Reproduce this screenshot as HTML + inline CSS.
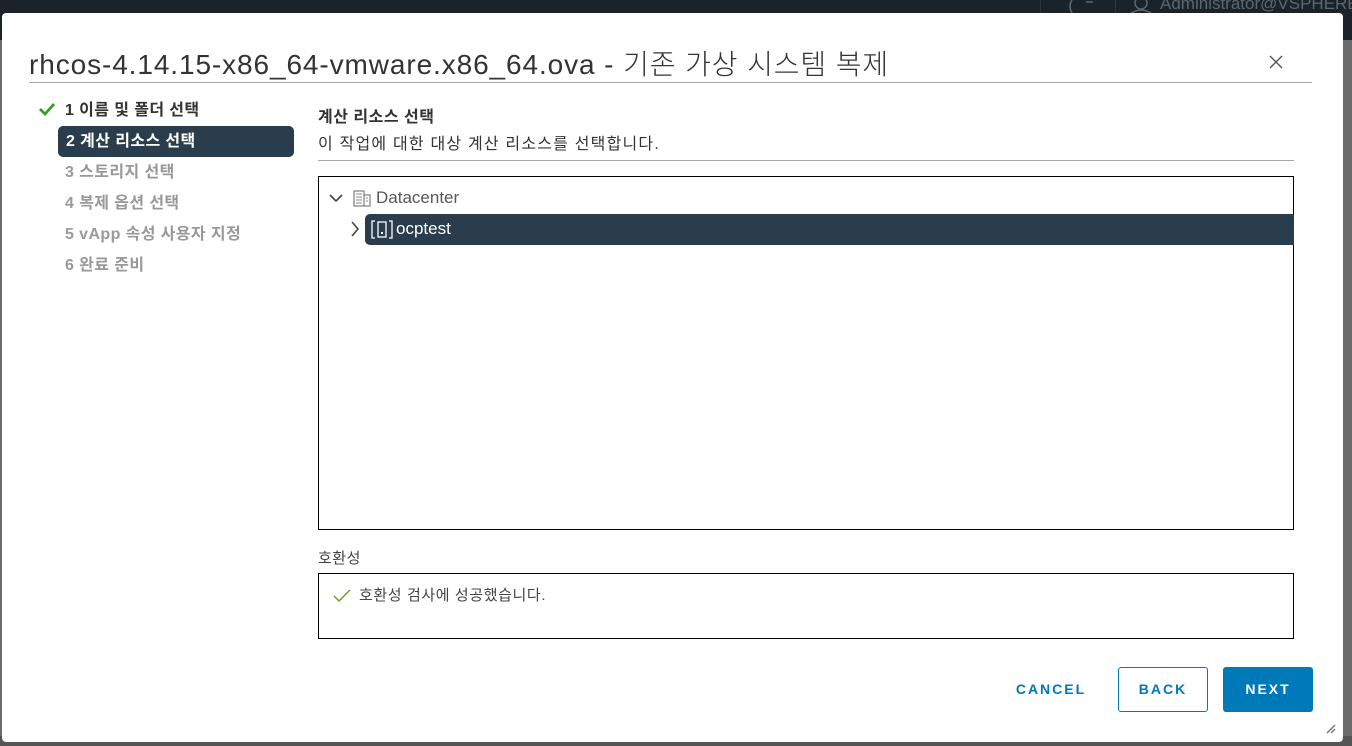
<!DOCTYPE html>
<html><head><meta charset="utf-8"><style>
*{box-sizing:border-box;margin:0;padding:0}
html,body{width:1352px;height:746px;overflow:hidden}
body{background:#6b6b6b;font-family:"Liberation Sans","Noto Sans CJK KR",sans-serif;position:relative;color:#333}
.top{position:absolute;left:0;top:0;width:1352px;height:40px;background:#1b2228}
.top .adm{position:absolute;left:1160px;top:-6px;color:#5d6770;font-size:17px}
.top .sep{position:absolute;top:0;width:1px;height:14px;background:#2c363e}
.bottom{position:absolute;left:0;top:736px;width:1352px;height:10px;background:#555}
.modal{position:absolute;left:2px;top:13px;width:1341px;height:729px;background:#fff;border-radius:4px}
.title{position:absolute;left:29px;top:43px;font-size:28px;color:#333;font-weight:300;letter-spacing:0.9px;white-space:nowrap}
.close{position:absolute;left:1268px;top:54px}
.hr1{position:absolute;left:29px;top:82px;width:1283px;height:1px;background:#a8a8a8}
.step{position:absolute;left:65px;font-size:16px;font-weight:bold;color:#999;white-space:nowrap;letter-spacing:0.4px}
.step.done{color:#333}
.step.active{left:58px;width:236px;height:31px;background:#293d4c;color:#fff;border-radius:5px;padding-left:8px;line-height:31px}
.h2{position:absolute;left:318px;top:103px;font-size:16px;font-weight:bold;color:#333;letter-spacing:0.5px}
.sub{position:absolute;left:318px;top:130px;font-size:16px;color:#333;letter-spacing:1.2px}
.hr2{position:absolute;left:318px;top:160px;width:976px;height:1px;background:#a8a8a8}
.tree{position:absolute;left:318px;top:176px;width:976px;height:354px;border:1px solid #000}
.dc{position:absolute;left:57px;top:11px;font-size:17px;color:#575757}
.sel{position:absolute;left:46px;top:37px;width:929px;height:31px;background:#293d4c;border-radius:5px 0 0 5px;color:#fff;font-size:17px}
.sel span{position:absolute;left:31px;top:5px}
.compl{position:absolute;left:318px;top:547px;font-size:15px;color:#444;letter-spacing:0.5px}
.cbox{position:absolute;left:318px;top:573px;width:976px;height:66px;border:1px solid #000}
.cbox span{position:absolute;left:40px;top:10px;font-size:15px;color:#444;letter-spacing:0.6px}
.btn{position:absolute;top:667px;height:45px;font-size:14px;font-weight:bold;letter-spacing:2px;line-height:45px;text-align:center;border-radius:3px}
</style></head><body>
<div class="top">
<div class="sep" style="left:1040px"></div><div class="sep" style="left:1115px"></div>
<svg style="position:absolute;left:1066px;top:0" width="30" height="14"><path d="M6 0 Q2 6 6 13" stroke="#5d6770" fill="none" stroke-width="1.5"/><path d="M20 2 h7" stroke="#5d6770" stroke-width="1.5"/></svg>
<svg style="position:absolute;left:1128px;top:0" width="26" height="14"><circle cx="13" cy="3" r="6" stroke="#5d6770" fill="none" stroke-width="1.5"/><path d="M2 14 Q13 6 24 14" stroke="#5d6770" fill="none" stroke-width="1.5"/></svg>
<div class="adm">Administrator@VSPHERE</div>
</div>
<div class="bottom"></div>
<div class="modal"></div>
<div class="title">rhcos-4.14.15-x86_64-vmware.x86_64.ova - 기존 가상 시스템 복제</div>
<svg class="close" width="16" height="16"><path d="M2 2L14 14M14 2L2 14" stroke="#555" stroke-width="1.4"/></svg>
<div class="hr1"></div>
<svg style="position:absolute;left:39px;top:102px" width="16" height="14"><path d="M1 7 L6 12 L15 2" stroke="#3c9a2e" stroke-width="2.8" fill="none"/></svg>
<div class="step done" style="top:96px">1 이름 및 폴더 선택</div>
<div class="step active" style="top:126px">2 계산 리소스 선택</div>
<div class="step" style="top:158px">3 스토리지 선택</div>
<div class="step" style="top:189px">4 복제 옵션 선택</div>
<div class="step" style="top:220px">5 vApp 속성 사용자 지정</div>
<div class="step" style="top:251px">6 완료 준비</div>
<div class="h2">계산 리소스 선택</div>
<div class="sub">이 작업에 대한 대상 계산 리소스를 선택합니다.</div>
<div class="hr2"></div>
<div class="tree">
<svg style="position:absolute;left:10px;top:16px" width="14" height="10"><path d="M1 2 L7 8 L13 2" stroke="#444" stroke-width="1.6" fill="none"/></svg>
<svg style="position:absolute;left:34px;top:13px" width="18" height="17"><rect x="1" y="1" width="10" height="15" fill="none" stroke="#666"/><rect x="11" y="5" width="6" height="11" fill="none" stroke="#666"/><path d="M3 4h6M3 7h6M3 10h6M3 13h6M13 8h2M13 11h2" stroke="#888"/></svg>
<div class="dc">Datacenter</div>
<svg style="position:absolute;left:31px;top:44px" width="10" height="16"><path d="M2 1 L8 8 L2 15" stroke="#444" stroke-width="1.6" fill="none"/></svg>
<div class="sel">
<svg style="position:absolute;left:6px;top:6px" width="22" height="19"><path d="M4 1H1V18H4M18 1H21V18H18" stroke="#fff" fill="none" stroke-width="1.3"/><rect x="7" y="2" width="8" height="15" fill="none" stroke="#fff" stroke-width="1.3"/><rect x="10" y="12" width="2" height="2" fill="#fff"/></svg>
<span>ocptest</span></div>
</div>
<div class="compl">호환성</div>
<div class="cbox">
<svg style="position:absolute;left:14px;top:15px" width="18" height="14"><path d="M1 7 L6 12 L17 1" stroke="#62a420" stroke-width="1.5" fill="none"/></svg>
<span>호환성 검사에 성공했습니다.</span></div>
<div class="btn" style="left:1001px;width:100px;color:#0079b8">CANCEL</div>
<div class="btn" style="left:1118px;width:90px;color:#0079b8;border:1px solid #0079b8;line-height:43px">BACK</div>
<div class="btn" style="left:1223px;width:90px;color:#fff;background:#0079b8">NEXT</div>
<svg style="position:absolute;left:1326px;top:724px" width="10" height="10"><path d="M9 1L1 9M9 5L5 9" stroke="#777" stroke-width="1.5"/></svg>
</body></html>
